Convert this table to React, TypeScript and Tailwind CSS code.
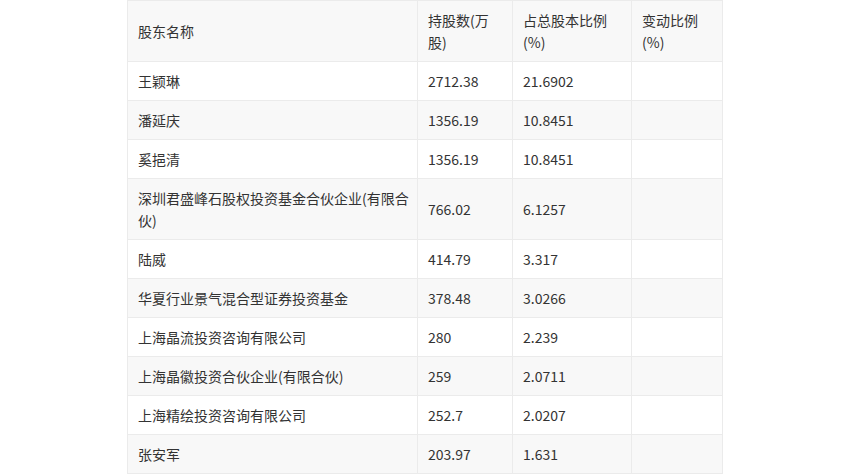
import React from "react";

const rows: [string, string, string, string][] = [
  ["王颖琳", "2712.38", "21.6902", ""],
  ["潘延庆", "1356.19", "10.8451", ""],
  ["奚挹清", "1356.19", "10.8451", ""],
  ["深圳君盛峰石股权投资基金合伙企业(有限合伙)", "766.02", "6.1257", ""],
  ["陆威", "414.79", "3.317", ""],
  ["华夏行业景气混合型证券投资基金", "378.48", "3.0266", ""],
  ["上海晶流投资咨询有限公司", "280", "2.239", ""],
  ["上海晶徽投资合伙企业(有限合伙)", "259", "2.0711", ""],
  ["上海精绘投资咨询有限公司", "252.7", "2.0207", ""],
  ["张安军", "203.97", "1.631", ""],
];

export default function App() {
  const cell = "border border-[#ebebeb] pl-[10px] py-[8px] align-middle text-left font-normal";
  const pad = ["pr-[6px]", "pr-[10px]", "pr-[10px]", "pr-[10px]"];
  return (
    <div
      className="w-[850px] h-[474px] bg-white overflow-hidden flex justify-center"
      style={{ fontFamily: '"Microsoft YaHei", "Noto Sans CJK SC", sans-serif' }}
    >
      <table className="w-[595px] border-collapse table-fixed text-[14px] leading-[22px] text-[#333333] self-start">
        <colgroup>
          <col className="w-[290px]" />
          <col className="w-[95px]" />
          <col className="w-[119px]" />
          <col className="w-[91px]" />
        </colgroup>
        <thead>
          <tr className="bg-[#f8f8f8]">
            <th className={`${cell} ${pad[0]}`}>股东名称</th>
            <th className={`${cell} ${pad[1]}`}>持股数(万股)</th>
            <th className={`${cell} ${pad[2]}`}>占总股本比例(%)</th>
            <th className={`${cell} ${pad[3]}`}>变动比例(%)</th>
          </tr>
        </thead>
        <tbody>
          {rows.map((r, i) => (
            <tr key={i} className={i % 2 === 1 ? "bg-[#f8f8f8]" : "bg-white"}>
              {r.map((c, j) => (
                <td key={j} className={`${cell} ${pad[j]}`}>
                  {c}
                </td>
              ))}
            </tr>
          ))}
        </tbody>
      </table>
    </div>
  );
}
